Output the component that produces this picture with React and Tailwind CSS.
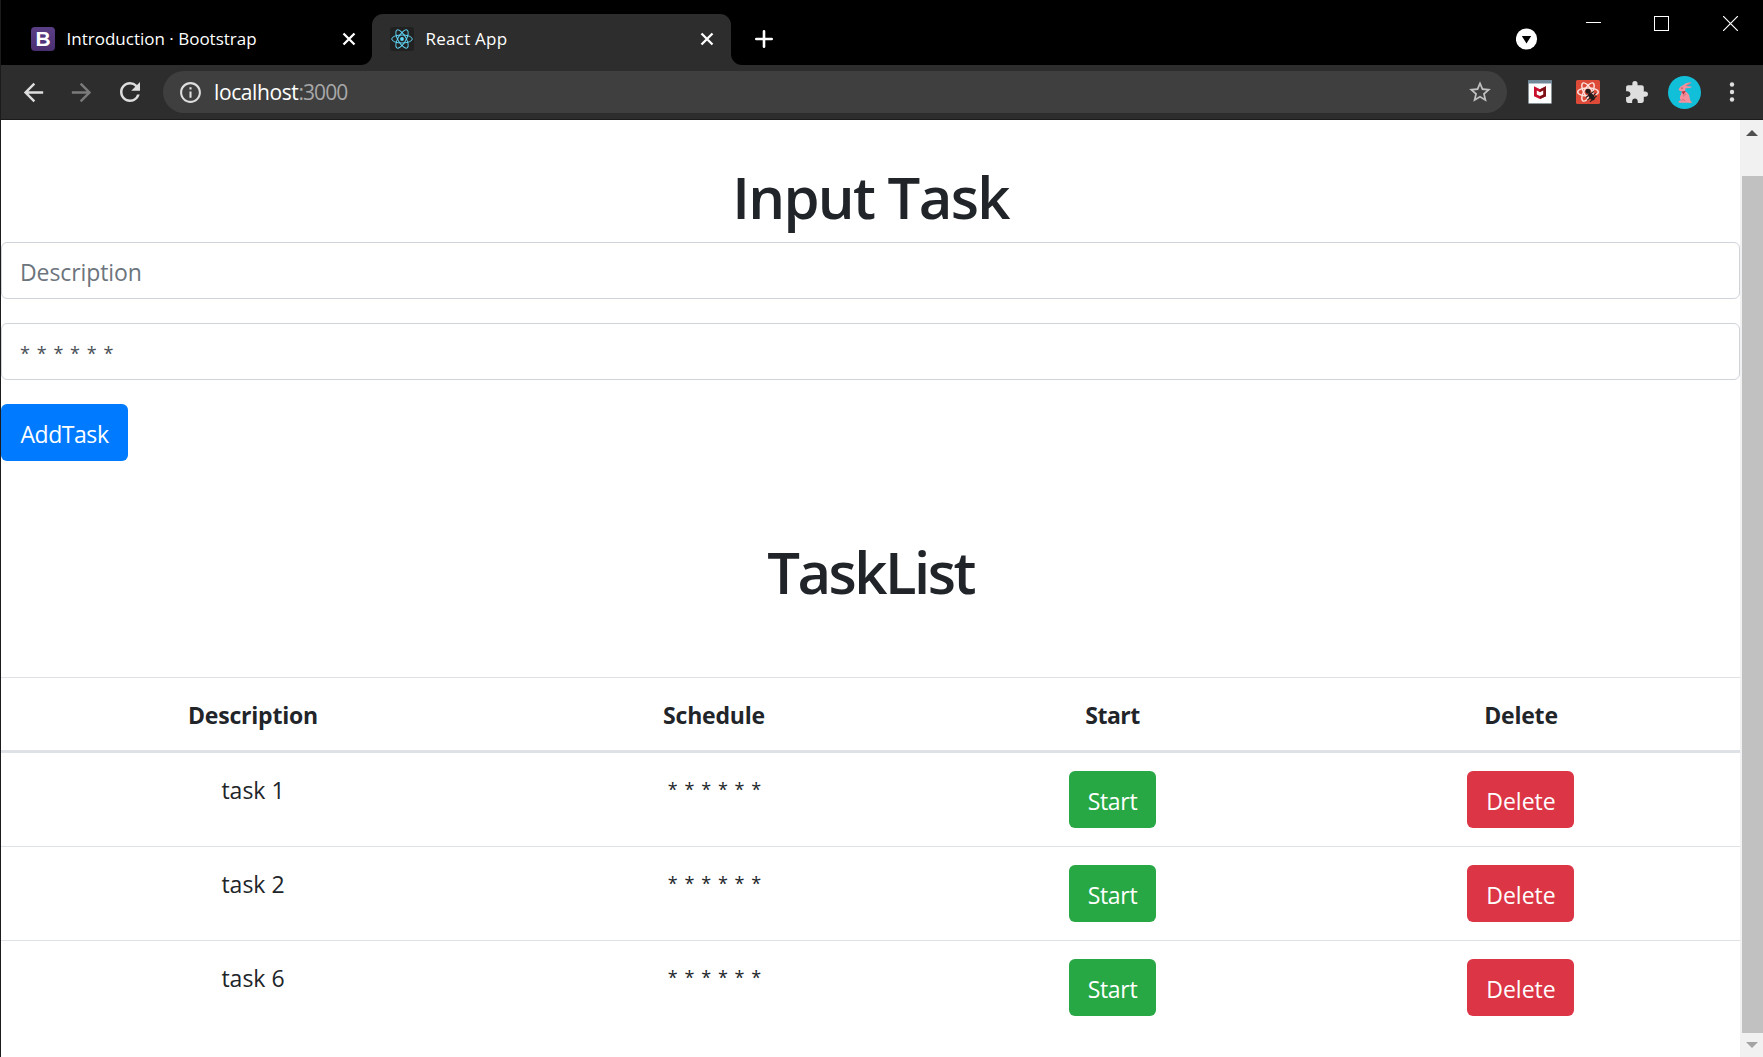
import React from 'react';
import { MdArrowBack, MdArrowForward, MdRefresh, MdInfoOutline, MdStarBorder, MdExtension } from 'react-icons/md';

const TASKS = ['task 1', 'task 2', 'task 6'];

function Cross() {
  return (
    <svg viewBox="0 0 14 14" className="size-3.5 shrink-0" stroke="#fff" strokeWidth="2.3">
      <path d="M1.5 1.5 12.5 12.5M12.5 1.5 1.5 12.5" />
    </svg>
  );
}

function BootstrapLogo() {
  return (
    <div className="flex size-6 shrink-0 items-center justify-center rounded bg-linear-to-b from-[#5b3f86] to-[#4a2f70] pb-px font-['Liberation_Sans',sans-serif] text-[21px] leading-none font-bold text-white">
      B
    </div>
  );
}

function Atom({ className, color, width }) {
  return (
    <svg viewBox="-12 -12 24 24" className={className} fill="none" stroke={color} strokeWidth={width}>
      <ellipse rx="10.3" ry="4" />
      <ellipse rx="10.3" ry="4" transform="rotate(60)" />
      <ellipse rx="10.3" ry="4" transform="rotate(120)" />
      <circle r="1.9" fill={color} stroke="none" />
    </svg>
  );
}

function TabFlare({ className }) {
  return (
    <svg viewBox="0 0 11 11" className={className}>
      <path d="M11 0V11H0A11 11 0 0 0 11 0Z" fill="#2d2d2d" />
    </svg>
  );
}

function TitleBar() {
  return (
    <div className="flex h-[65px] bg-black text-white">
      <div className="flex h-[51px] w-[371px] items-center self-end pr-[16px] pb-px pl-[30px]">
        <BootstrapLogo />
        <span className="ml-[11.5px] text-[17px] leading-6 whitespace-nowrap">Introduction · Bootstrap</span>
        <span className="ml-auto flex"><Cross /></span>
      </div>
      <div className="relative flex h-[51px] w-[359px] items-center self-end rounded-t-[11px] bg-[#2d2d2d] pr-[17px] pb-px pl-[18px]">
        <TabFlare className="absolute bottom-0 -left-[11px] size-[11px]" />
        <TabFlare className="absolute -right-[11px] bottom-0 size-[11px] -scale-x-100" />
        <Atom className="size-6 rounded-[3px] bg-[#212121]" color="#61dafb" width="0.95" />
        <span className="ml-[11.5px] text-[17px] leading-6 tracking-[0.25px]">React App</span>
        <span className="ml-auto flex"><Cross /></span>
      </div>
      <svg viewBox="0 0 18 18" className="mt-[30px] ml-[24px] size-[18px]" stroke="#fff" strokeWidth="2.6" strokeLinecap="round">
        <path d="M9 1.3V16.7M1.3 9H16.7" />
      </svg>
      <svg viewBox="0 0 22 22" className="mt-[28px] ml-auto size-[22px]">
        <circle cx="10.5" cy="11" r="10.6" fill="#fff" />
        <path d="M5.8 8H15.2L10.5 15.5Z" fill="#000" />
      </svg>
      <svg viewBox="0 0 15 15" className="mt-[15px] ml-[48px] size-[15px]" fill="#fff">
        <path d="M0 7H15V8H0Z" />
      </svg>
      <div className="mt-[16px] ml-[53px] size-[15px] border border-white" />
      <svg viewBox="0 0 15 15" className="mt-[16px] mr-[25px] ml-[54px] size-[15px]" stroke="#fff" strokeWidth="1.2">
        <path d="M0 0 15 15M15 0 0 15" />
      </svg>
    </div>
  );
}

function ShieldExtension() {
  return (
    <svg viewBox="0 0 24 24" className="ml-[21px] size-6">
      <rect width="24" height="24" rx="1.5" fill="#8b9499" />
      <rect width="24" height="4" rx="1" fill="#72899a" />
      <rect x="1" y="3.5" width="22" height="19.5" fill="#fff" />
      <path d="M6 6.2 12 9.2 18 6.2V16.3L12 19 6 16.3Z" fill="#c8102e" />
      <path d="M12 9.2 18 6.2V16.3L12 19V16L15.2 14.6V10.6L12 12.3Z" fill="#7d1118" />
      <path d="M8.8 10.6 12 12.3 15.2 10.6V14.6L12 16 8.8 14.6Z" fill="#fff" />
    </svg>
  );
}

function DevtoolsExtension() {
  return (
    <svg viewBox="0 0 24 24" className="ml-6 size-6">
      <rect width="24" height="24" rx="1.5" fill="#dd4a38" />
      <g transform="translate(12 12)" fill="none" stroke="#fbe4e0" strokeWidth="1.4">
        <ellipse rx="10.3" ry="4" />
        <ellipse rx="10.3" ry="4" transform="rotate(60)" />
        <ellipse rx="10.3" ry="4" transform="rotate(120)" />
      </g>
      <ellipse cx="17" cy="18.5" rx="4.5" ry="3.4" transform="rotate(-35 17 18.5)" fill="#dd4a38" />
      <circle cx="12" cy="11.3" r="2.5" fill="#221d1d" />
      <g transform="translate(15 16) rotate(-38)" stroke="#221d1d" strokeWidth="1.1">
        <path d="M-5-2H5M-5.5 1H5.5M-4.5 4 4.5 3.4" />
        <ellipse cy="0.8" rx="2.4" ry="4.2" fill="#221d1d" stroke="none" />
      </g>
    </svg>
  );
}

function Avatar() {
  return (
    <svg viewBox="0 0 33 33" className="ml-[19px] size-[33px]">
      <circle cx="16.5" cy="16.5" r="16.5" fill="#12bfd9" />
      <path d="M15 9.3Q18 6.4 23.6 6.2 22.2 8.5 17.6 10L24.4 10.7Q21.8 12.6 17.4 12.2 17.6 14 17 15.2 21.8 17.6 21.8 22.6 22 25.2 24.2 26.6 22.6 27.3 20.4 26.8H11.4Q9.6 26.3 10.8 25L12.8 24.4Q10.8 21.6 13.2 18.2L13.8 15.2Q10.4 14.8 10.8 13 12.4 10 15 9.3Z" fill="#f2919d" />
      <path d="M13.6 15.4 17.8 15 15.4 18.8Z" fill="#b3303d" />
      <path d="M18 17.8 15 20.3M13.4 24.4Q15 22.4 17 24.8M18.4 9.6 22.4 7.4" stroke="#c9606e" strokeWidth="0.8" fill="none" />
      <circle cx="14" cy="12" r="0.6" fill="#4b2026" />
    </svg>
  );
}

function Toolbar() {
  return (
    <div className="flex h-[55px] items-center border-b border-[#1b1b1b] bg-[#2d2d2d] text-[#dedede]">
      <MdArrowBack className="ml-[18px] size-[29px] shrink-0" />
      <MdArrowForward className="ml-[19px] size-[29px] shrink-0 text-[#7b7b7b]" />
      <MdRefresh className="ml-[19px] size-[30px] shrink-0" />
      <div className="ml-[18px] flex h-[42px] w-[1344px] items-center rounded-full bg-[#3f3f3f] pr-[14px] pl-[15px]">
        <MdInfoOutline className="size-[25px]" />
        <span className="ml-[11px] text-[21px] leading-8 tracking-[-0.4px] text-white">
          localhost<span className="text-[#a8a8a8] tracking-[-0.9px]">:3000</span>
        </span>
        <MdStarBorder className="ml-auto size-[26px] text-[#c0c0c0]" />
      </div>
      <ShieldExtension />
      <DevtoolsExtension />
      <MdExtension className="ml-[24px] size-[25px]" />
      <Avatar />
      <svg viewBox="0 0 6 20" className="ml-[28px] h-5 w-1.5" fill="#dedede">
        <circle cx="3" cy="2.5" r="2.2" />
        <circle cx="3" cy="10" r="2.2" />
        <circle cx="3" cy="17.5" r="2.2" />
      </svg>
    </div>
  );
}

function Button({ className, children }) {
  return (
    <button className={`h-[57px] rounded-md pt-0.5 text-center text-[23px] leading-9 text-white ${className}`}>
      {children}
    </button>
  );
}

function Stars() {
  return <span className="text-[18px] [word-spacing:2.1px]">* * * * * *</span>;
}

function Form() {
  return (
    <form className="flex flex-col">
      <input
        className="h-[57px] rounded-md border border-[#ced4da] px-[18px] pt-0.5 text-[23px] tracking-[-0.1px] placeholder:text-[#6c757d]"
        placeholder="Description"
      />
      <div className="mt-6 flex h-[57px] items-center rounded-md border border-[#ced4da] px-[18px] pt-1 text-[#495057]">
        <Stars />
      </div>
      <Button className="mt-6 w-[127px] bg-[#007bff] tracking-[-0.45px]">AddTask</Button>
    </form>
  );
}

function TaskTable() {
  return (
    <table className="mt-[69px] w-[1739px] table-fixed border-separate border-spacing-0 text-center text-[23px] leading-9">
      <colgroup>
        <col className="w-[504px]" />
        <col className="w-[418px]" />
        <col className="w-[379px]" />
        <col className="w-[438px]" />
      </colgroup>
      <thead>
        <tr className="h-[76px] tracking-[-0.2px] *:border-t *:border-b-3 *:border-[#dee2e6] *:pt-0.5">
          <th>Description</th>
          <th>Schedule</th>
          <th className="tracking-[-0.5px]">Start</th>
          <th>Delete</th>
        </tr>
      </thead>
      <tbody>
        {TASKS.map((task) => (
          <tr key={task} className="h-[94px] align-top *:border-t *:border-[#dee2e6] *:pt-[18px] first:h-[93px] first:*:border-t-0">
            <td><div className="mt-px">{task}</div></td>
            <td><div className="-mt-0.5 pl-px"><Stars /></div></td>
            <td>
              <Button className="mx-auto block w-[87px] bg-[#28a745] tracking-[-0.3px]">Start</Button>
            </td>
            <td>
              <Button className="mx-auto block w-[107px] -translate-x-px bg-[#dc3545] pl-0.5">Delete</Button>
            </td>
          </tr>
        ))}
      </tbody>
    </table>
  );
}

function Scrollbar() {
  return (
    <div className="flex w-[23px] shrink-0 flex-col items-end bg-[#f1f1f1]">
      <svg viewBox="0 0 12 6" className="mt-[10px] mr-[5px] h-1.5 w-3"><path d="M6 0 12 6H0Z" fill="#505050" /></svg>
      <div className="mt-10 h-[857px] w-[21px] bg-[#c1c1c1]" />
      <svg viewBox="0 0 12 6" className="mt-[9px] mr-[5px] h-1.5 w-3"><path d="M0 0H12L6 6Z" fill="#a3a3a3" /></svg>
    </div>
  );
}

export default function App() {
  return (
    <div className="h-[1057px] w-[1763px] overflow-hidden border-l border-[#1b1b1b] bg-white font-['Open_Sans',sans-serif] text-[#212529]">
      <TitleBar />
      <Toolbar />
      <div className="flex h-[937px]">
        <main className="w-[1739px]">
          <h1 className="mb-[9px] pt-[41px] text-center text-[58px] leading-[72px] font-semibold tracking-[-1.7px]">Input Task</h1>
          <Form />
          <h1 className="mt-[75px] text-center text-[58px] leading-[72px] font-semibold tracking-[-2.5px]">TaskList</h1>
          <TaskTable />
        </main>
        <Scrollbar />
      </div>
    </div>
  );
}
